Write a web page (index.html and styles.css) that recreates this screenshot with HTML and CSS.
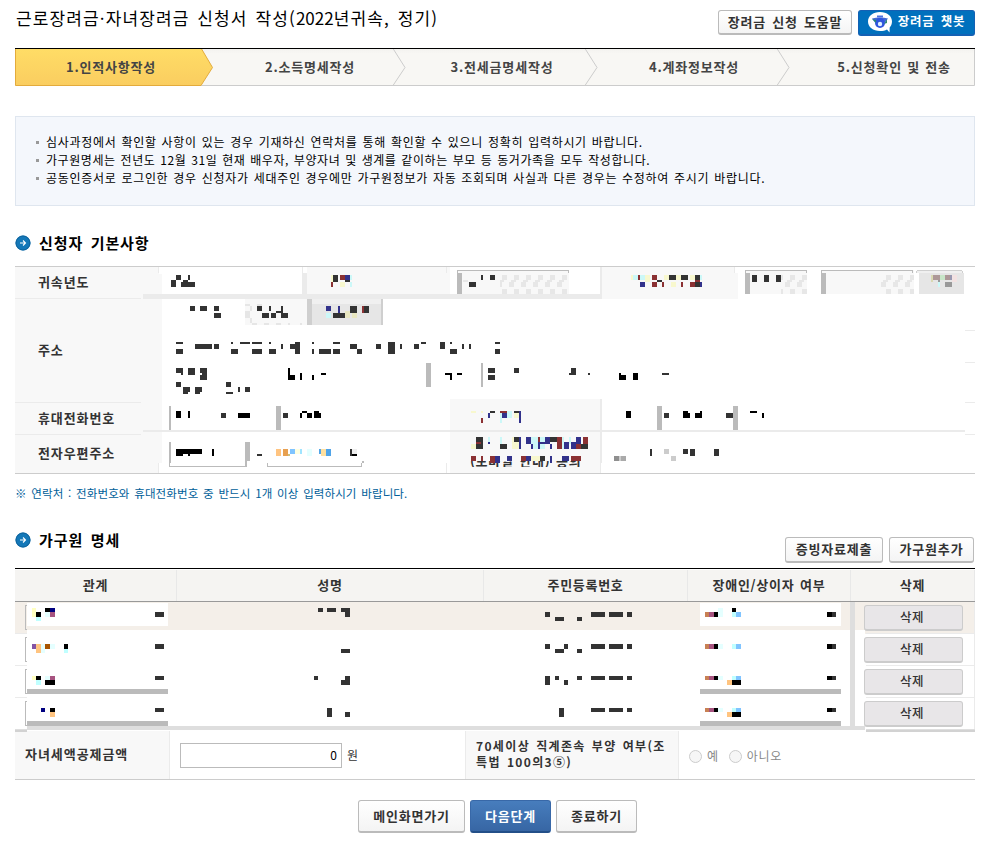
FILE: index.html
```html
<!DOCTYPE html>
<html lang="ko">
<head>
<meta charset="utf-8">
<title>근로장려금·자녀장려금 신청서 작성</title>
<link rel="stylesheet" href="styles.css">
</head>
<body>
<main class="page">
  <header class="top">
    <h1>근로장려금·자녀장려금 신청서 작성(<span class="num">2022</span>년귀속, 정기)</h1>
    <div class="top-actions">
      <button class="btn help">장려금 신청 도움말</button>
      <button class="btn chatbot">
        <svg width="25" height="21" viewBox="0 0 25 21"><path d="M12 0C5 0 0 4 0 9.500S5 19 12 19c3 0 5-.5 7-1.500l2.500 3 .2-5C23 14 24 12 24 9.500 24 4 19 0 12 0z" fill="#fff"/><path d="M4 6.500c5-1.500 11-1.500 16 0l-3 4H7z" fill="#4568d6"/><circle cx="12" cy="11" r="5" fill="#2f55dd"/><circle cx="12" cy="12" r="2.200" fill="#dff1ff"/><path d="M4 7l4 1v3zM16 12l3-5v4z" fill="#2b8a72"/><path d="M9 3.500h6v2H9z" fill="#4c70e0"/></svg>
        <span>장려금 챗봇</span>
      </button>
    </div>
  </header>

  <ol class="steps">
    <svg class="steps-bg" width="960" height="38" viewBox="15 48 960 38">
      <defs>
        <linearGradient id="gy" x1="0" y1="0" x2="0" y2="1"><stop offset="0" stop-color="#ffdd66"/><stop offset="1" stop-color="#facd60"/></linearGradient>
        <linearGradient id="gg" x1="0" y1="0" x2="0" y2="1"><stop offset="0" stop-color="#f2f1ee"/><stop offset=".15" stop-color="#f8f7f4"/><stop offset="1" stop-color="#f8f7f4"/></linearGradient>
      </defs>
      <path d="M15 48h960v38H15z" fill="url(#gg)"/>
      <path d="M200 85.500h774.500V48" fill="none" stroke="#ccc"/>
      <path d="M393 48.500l12 19-12 18M585 48.500l12 19-12 18M777 48.500l12 19-12 18" fill="none" stroke="#ccc"/>
      <path d="M15.500 48v37.500H201l11.500-18L201 48z" fill="url(#gy)" stroke="#e3ab3c"/>
      <path d="M15 48h960v1H15z" fill="#000"/>
    </svg>
    <li>1.인적사항작성</li><li>2.소득명세작성</li><li>3.전세금명세작성</li><li>4.계좌정보작성</li><li>5.신청확인 및 전송</li>
  </ol>

  <ul class="notice">
    <li>심사과정에서 확인할 사항이 있는 경우 기재하신 연락처를 통해 확인할 수 있으니 정확히 입력하시기 바랍니다.</li>
    <li class="tight">가구원명세는 전년도 12월 31일 현재 배우자, 부양자녀 및 생계를 같이하는 부모 등 동거가족을 모두 작성합니다.</li>
    <li>공동인증서로 로그인한 경우 신청자가 세대주인 경우에만 가구원정보가 자동 조회되며 사실과 다른 경우는 수정하여 주시기 바랍니다.</li>
  </ul>

  <div class="section-head basic">
    <svg class="bullet" width="16" height="16" viewBox="0 0 16 16"><circle cx="8" cy="8" r="7.500" fill="#1478b8"/><circle cx="8" cy="8" r="7" fill="none" stroke="#0f639c"/><path d="M5 8h5.500M8 5.500L10.500 8 8 10.500" fill="none" stroke="#fff" stroke-width="1.100"/></svg>
    <h2>신청자 기본사항</h2>
  </div>

  <section class="applicant">
    <div class="row r1"><div class="label">귀속년도</div></div>
    <div class="row r2"><div class="label">주소</div></div>
    <div class="row r3"><div class="label">휴대전화번호</div></div>
    <div class="row r4"><div class="label">전자우편주소</div></div>
    <svg class="mask" width="960" height="208" viewBox="15 266 960 208" shape-rendering="crispEdges">
      <defs>
        <clipPath id="tail"><path d="M465 461h125v6H465z"/></clipPath>
        <pattern id="chk" x="514" y="275" width="12" height="14" patternUnits="userSpaceOnUse"><path d="M0 0h5v5H0zM-3 5h5v2h-5zM9 5h3v2H9zM7 7h5v5H7z" fill="#e7e7e7"/></pattern>
      </defs>
      <!-- cell fills and rules -->
      <path d="M159 267h3v7h-3zM159 463h3v10h-3z" fill="#fff"/>
      <path d="M147 267h11v27h-11zM162 267h0v0h0zM307 267h143v27H307zM602 267h132v32H602zM734 273h4v26h-4zM245 299h62v26h-62zM450 399h150v74H450z" fill="#f8f8f8"/>
      <path d="M143 294h459v5H143zM302 267h1v6h-1zM302 273h5v21h-5zM158 267h1v6h-1zM446 267h1v6h-1zM600 267h2v32h-2zM734 267h1v6h-1zM158 463h1v10h-1zM446 463h1v10h-1zM600 399h2v64h-2zM600 463h1v10h-1zM143 430h822v2H143zM965 330h10v1h-10zM965 362h10v1h-10zM965 402h10v1h-10zM965 434h10v1h-10z" fill="#ebebeb"/>
      <!-- masked fields -->
      <path d="M457 270h112v24H457zM745 270h62v24h-62zM821 270h93v24h-93z" fill="#f8f8f8"/>
      <path d="M500 275h69v19h-69zM781 275h26v19h-26zM881 275h33v19h-33zM462 280h6v2h-6z" fill="url(#chk)"/>
      <path d="M457 270h112v1H457zM745 270h62v1h-62zM821 270h92v1h-92zM457 273h5v21h-5zM745 273h5v21h-5zM821 273h5v21h-5zM457 270h1v3h-1zM568 270h1v3h-1zM745 270h1v3h-1zM806 270h1v3h-1zM821 270h1v3h-1zM912 270h1v3h-1zM426 363h5v24h-5zM481 363h2v24h-2zM169 406h2v24h-2zM276 406h5v24h-5zM657 406h5v24h-5zM733 406h5v24h-5zM169 442h2v21h-2zM169 463h1v4h-1zM169 466h77v1h-77zM245 442h5v19h-5zM245 461h2v6h-2zM267 463h1v4h-1zM267 466h95v1h-95zM361 463h1v4h-1zM362 461h2v2h-2z" fill="#bbb"/>
      <path d="M245 304h5v2h-5zM250 306h2v5h-2zM245 311h5v7h-5zM250 318h2v5h-2zM252 323h5v2h-5zM264 323h5v2h-5zM276 323h5v2h-5zM288 323h2v2h-2zM300 323h2v2h-2zM257 304h5v2h-5zM312 304h69v21h-69zM919 273h45v21h-45z" fill="#e6e6e6"/>
      <path d="M312 299h69v5h-69zM917 271h45v2h-45z" fill="#f0f0f0"/>
      <path d="M307 299h5v26h-5zM381 299h2v26h-2zM917 270h45v1h-45zM916 271h1v2h-1zM962 271h1v2h-1z" fill="#cfcfcf"/>
      <text class="tail" x="470" y="466" clip-path="url(#tail)">(모바일 안내) 동의</text>
      <!-- light tints -->
      <path d="M331 275h2v7h-2zM340 282h5v5h-5zM631 275h2v5h-2zM645 275h5v7h-5zM664 275h5v5h-5zM676 275h5v5h-5zM690 275h5v5h-5zM671 282h5v5h-5zM471 411h5v2h-5zM481 411h2v2h-2zM514 413h5v5h-5zM471 444h5v5h-5zM512 437h7v12h-7zM531 456h9v5h-9z" fill="#f8f8ce"/>
      <path d="M345 311h5v7h-5zM352 313h5v5h-5z" fill="#e8e6c0"/>
      <path d="M350 275h2v5h-2zM350 282h2v5h-2zM633 275h5v5h-5zM640 275h5v5h-5zM700 275h2v5h-2zM326 313h5v5h-5zM500 413h2v10h-2zM507 411h5v7h-5zM488 437h2v5h-2zM500 437h2v7h-2zM531 437h14v12h-14zM562 437h2v12h-2zM569 437h2v7h-2zM938 282h2v5h-2z" fill="#ccf8f8"/>
      <!-- dark pixels -->
      <path d="M333 275h5v7h-5zM345 280h5v2h-5zM657 280h5v2h-5zM669 275h7v5h-7zM681 275h7v5h-7zM695 275h5v5h-5zM695 282h5v5h-5zM481 275h2v5h-2zM490 275h5v5h-5zM469 282h7v5h-7zM752 275h5v7h-5zM764 275h5v7h-5zM776 275h5v7h-5zM171 280h5v7h-5zM176 275h5v5h-5zM181 282h14v5h-14zM188 275h2v5h-2zM183 280h5v2h-5zM190 306h5v5h-5zM200 306h7v5h-7zM214 306h5v5h-5zM214 313h7v5h-7zM257 306h5v5h-5zM269 306h2v5h-2zM281 306h2v7h-2zM276 311h7v2h-7zM262 313h7v5h-7zM271 313h5v5h-5zM281 313h7v5h-7zM333 313h12v5h-12zM350 306h7v7h-7zM364 306h5v7h-5z" fill="#333"/>
      <path d="M176 342h7v2h-7zM176 349h7v5h-7zM195 344h17v5h-17zM214 344h5v5h-5zM231 342h2v2h-2zM231 349h7v5h-7zM240 342h10v2h-10zM252 342h10v2h-10zM252 349h10v5h-10zM269 342h2v2h-2zM269 349h7v5h-7zM281 344h2v5h-2zM290 344h10v5h-10zM295 342h5v12h-5zM312 342h2v2h-2zM312 349h2v5h-2zM319 349h12v5h-12zM333 342h7v2h-7zM333 349h7v5h-7zM350 344h7v5h-7zM357 349h5v5h-5zM376 344h5v5h-5zM388 342h7v12h-7zM400 344h2v5h-2zM414 344h5v5h-5zM421 342h5v2h-5zM440 342h5v7h-5zM450 342h2v2h-2zM450 349h7v5h-7zM462 344h2v5h-2zM469 344h2v5h-2zM495 342h5v2h-5zM495 349h5v5h-5z" fill="#333"/>
      <path d="M176 368h7v5h-7zM181 373h2v2h-2zM188 368h7v7h-7zM200 368h7v5h-7zM202 373h5v2h-5zM200 375h7v5h-7zM176 382h5v5h-5zM183 387h7v5h-7zM183 392h5v2h-5zM195 387h7v5h-7zM195 392h5v2h-5zM226 382h5v5h-5zM226 392h7v2h-7zM238 387h2v5h-2zM245 387h5v5h-5zM488 368h7v5h-7zM488 375h7v5h-7zM514 368h5v5h-5zM571 368h5v7h-5zM569 373h7v2h-7zM588 373h2v2h-2zM662 373h7v2h-7z" fill="#333"/>
      <path d="M221 413h5v5h-5zM283 413h5v5h-5zM490 411h5v2h-5zM514 411h5v2h-5zM664 413h5v5h-5zM726 413h7v5h-7zM257 454h5v2h-5zM350 449h2v7h-2zM476 437h7v12h-7zM500 444h7v5h-7zM514 437h5v5h-5zM550 437h7v5h-7zM581 444h7v5h-7zM540 456h5v5h-5zM650 449h2v7h-2zM683 449h5v5h-5zM690 449h5v7h-5zM714 449h5v7h-5z" fill="#333"/>
      <path d="M288 368h2v12h-2zM288 375h7v5h-7zM300 373h2v7h-2zM312 375h2v5h-2zM321 373h5v2h-5zM445 373h7v2h-7zM450 375h2v5h-2zM457 373h5v2h-5zM619 373h2v2h-2zM619 375h7v5h-7zM633 373h5v7h-5zM176 411h5v7h-5zM188 411h2v7h-2zM238 413h12v5h-12zM300 413h2v5h-2zM302 411h5v2h-5zM307 413h5v5h-5zM314 411h5v2h-5zM314 413h7v5h-7zM626 411h5v7h-5zM683 411h5v7h-5zM688 413h2v5h-2zM695 413h7v5h-7zM700 411h2v2h-2zM750 411h7v2h-7zM762 413h2v5h-2zM176 449h26v5h-26zM176 454h7v2h-7zM188 454h2v2h-2zM212 449h2v7h-2zM352 454h5v2h-5z" fill="#000"/>
      <path d="M340 275h5v5h-5zM331 282h2v5h-2zM638 275h2v5h-2zM652 275h5v5h-5zM652 282h5v5h-5zM662 282h2v5h-2zM681 282h2v5h-2zM690 282h5v5h-5zM695 280h5v2h-5zM362 306h2v7h-2zM481 418h2v5h-2zM500 411h7v2h-7zM476 442h5v2h-5zM538 437h2v5h-2zM557 437h5v12h-5zM576 444h5v5h-5zM583 437h5v7h-5zM471 456h5v5h-5zM481 456h2v5h-2zM490 456h5v7h-5zM521 456h5v5h-5zM571 456h10v5h-10z" fill="#8b3133"/>
      <path d="M345 275h5v5h-5zM640 282h5v5h-5zM700 282h2v5h-2zM326 306h5v5h-5zM338 306h2v7h-2zM488 413h2v5h-2zM502 413h5v5h-5zM519 411h2v12h-2zM488 442h2v2h-2zM519 437h2v12h-2zM526 437h5v7h-5zM531 444h2v5h-2zM538 442h12v2h-12zM545 437h5v7h-5zM538 444h2v5h-2zM550 444h2v5h-2zM564 442h5v7h-5zM571 442h5v7h-5zM576 437h5v7h-5zM495 456h5v7h-5zM507 456h5v5h-5zM526 456h5v5h-5zM550 456h2v7h-2zM562 456h7v5h-7z" fill="#32328b"/>
      <path d="M933 275h7v5h-7zM945 275h5v5h-5z" fill="#ad9898"/><path d="M938 280h2v2h-2zM945 282h7v5h-7z" fill="#999"/><path d="M931 275h2v7h-2z" fill="#d9d9b2"/><path d="M940 275h5v5h-5z" fill="#c8e6c8"/><path d="M950 275h2v5h-2z" fill="#9898b0"/><path d="M952 275h5v7h-5z" fill="#f2e2e2"/>
      <path d="M276 449h5v7h-5z" fill="#ffc480"/><path d="M283 449h5v7h-5z" fill="#e8a050"/><path d="M288 454h2v2h-2z" fill="#ccc080"/><path d="M290 449h5v5h-5z" fill="#80c4ff"/><path d="M295 449h5v5h-5z" fill="#ffffe0"/><path d="M300 449h2v5h-2z" fill="#a0e4ff"/><path d="M307 449h5v7h-5z" fill="#e5ffff"/><path d="M319 449h2v5h-2zM326 449h5v7h-5z" fill="#50a4e8"/><path d="M321 449h5v7h-5z" fill="#ffe0a0"/><path d="M352 449h5v5h-5z" fill="#eee"/>
      <path d="M614 456h5v5h-5z" fill="#8f8f8f"/><path d="M621 456h5v5h-5z" fill="#aaa"/><path d="M619 456h2v5h-2zM664 449h5v5h-5zM671 456h5v5h-5z" fill="#ccc"/>
    </svg>
  </section>
  <p class="caution">※ 연락처 : 전화번호와 휴대전화번호 중 반드시 1개 이상 입력하시기 바랍니다.</p>

  <div class="section-head family">
    <svg class="bullet" width="16" height="16" viewBox="0 0 16 16"><circle cx="8" cy="8" r="7.500" fill="#1478b8"/><circle cx="8" cy="8" r="7" fill="none" stroke="#0f639c"/><path d="M5 8h5.500M8 5.500L10.500 8 8 10.500" fill="none" stroke="#fff" stroke-width="1.100"/></svg>
    <h2>가구원 명세</h2>
    <div class="family-actions"><button class="btn proof">증빙자료제출</button><button class="btn add">가구원추가</button></div>
  </div>

  <section class="members">
    <div class="mhead"><div>관계</div><div>성명</div><div>주민등록번호</div><div>장애인/상이자 여부</div><div>삭제</div></div>
    <div class="mrow first"><button class="del">삭제</button></div>
    <div class="mrow"><button class="del">삭제</button></div>
    <div class="mrow"><button class="del">삭제</button></div>
    <div class="mrow"><button class="del">삭제</button></div>
    <svg class="mask" width="960" height="164" viewBox="15 568 960 164" shape-rendering="crispEdges">
      <path d="M27 603h141v23H27zM700 603h141v23H700zM27 630h838v4H27z" fill="#fff"/>
      <path d="M15 633h12v1H15zM15 665h12v1H15zM15 697h12v1H15zM866 633h109v1H866zM866 665h109v1H866zM866 697h109v1H866zM974 602h1v127h-1z" fill="#ebebeb"/>
      <path d="M25 605h2v1h-1v23h1v1h-2zM25 637h2v1h-1v23h1v1h-2zM25 669h2v1h-1v23h1v1h-2zM25 701h2v1h-1v23h1v1h-2zM27 689h141v5H27zM27 721h141v5H27zM700 689h141v5H700zM700 721h141v5H700z" fill="#bbb"/>
      <path d="M850 602h5v124h-5zM27 726h838v4H27zM15 729h12v1H15zM866 729h109v1H866z" fill="#dedede"/>
      <path d="M15 730h12v2H15zM866 730h109v2H866z" fill="#d2d2d2"/>
      <path d="M155 612h9v5h-9zM318 608h5v4h-5zM327 608h9v4h-9zM341 608h9v4h-9zM345 612h5v5h-5zM545 612h5v5h-5zM555 617h9v4h-9zM577 617h5v4h-5zM591 612h14v5h-14zM609 612h14v5h-14zM627 612h5v5h-5zM832 612h4v5h-4zM155 644h9v5h-9zM341 649h9v4h-9zM545 644h5v5h-5zM564 644h4v5h-4zM555 649h9v4h-9zM577 649h5v4h-5zM591 644h14v5h-14zM609 644h14v5h-14zM627 644h5v5h-5zM832 644h4v5h-4z" fill="#333"/>
      <path d="M155 676h9v4h-9zM314 676h4v4h-4zM345 676h5v4h-5zM341 680h9v5h-9zM545 676h5v9h-5zM555 676h4v4h-4zM564 680h4v5h-4zM577 676h5v4h-5zM591 676h14v4h-14zM609 676h14v4h-14zM627 676h5v4h-5zM832 676h4v4h-4zM155 708h9v4h-9zM327 708h5v9h-5zM345 712h5v5h-5zM559 708h5v9h-5zM591 708h14v4h-14zM609 708h14v4h-14zM627 708h5v4h-5zM832 708h4v4h-4z" fill="#333"/>
      <path d="M36 612h5v5h-5zM45 608h5v4h-5zM64 644h4v5h-4zM36 676h5v4h-5zM45 680h10v5H45zM50 708h5v4h-5zM714 612h4v5h-4zM732 608h4v4h-4zM827 612h5v5h-5zM714 644h4v5h-4zM827 644h5v5h-5zM714 676h4v4h-4zM827 676h5v4h-5zM732 680h9v5h-9zM714 708h4v4h-4zM827 708h5v4h-5zM732 712h9v5h-9z" fill="#000"/>
      <path d="M32 608h4v9h-4zM32 676h4v4h-4z" fill="#ffffc0"/>
      <path d="M36 617h5v4h-5zM64 649h4v4h-4zM36 680h5v5h-5zM732 612h4v5h-4zM732 644h4v5h-4zM732 676h4v4h-4zM732 708h4v4h-4z" fill="#c0ffff"/>
      <path d="M45 612h5v5h-5zM41 644h4v9h-4zM50 644h5v5h-5zM45 676h5v4h-5zM718 608h5v9h-5zM718 644h5v5h-5zM718 676h5v4h-5zM718 708h5v4h-5z" fill="#e5ffff"/>
      <path d="M50 608h5v4h-5zM41 708h4v4h-4z" fill="#000080"/>
      <path d="M50 612h5v5h-5zM50 676h5v4h-5zM709 612h5v5h-5zM709 644h5v5h-5zM709 676h5v4h-5zM709 708h5v4h-5z" fill="#a75480"/>
      <path d="M705 612h4v5h-4zM705 644h4v5h-4zM705 676h4v4h-4zM705 708h4v4h-4z" fill="#c88054"/>
      <path d="M736 612h5v5h-5zM736 644h5v5h-5zM736 676h5v4h-5zM736 708h5v4h-5z" fill="#80c4ff"/>
      <path d="M36 644h5v9h-5zM50 712h5v5h-5zM727 680h5v5h-5zM727 712h5v5h-5z" fill="#ffc480"/>
      <path d="M32 644h4v5h-4z" fill="#8454a4"/><path d="M45 644h5v5h-5z" fill="#a85400"/>
    </svg>
  </section>

  <section class="extra">
    <div class="xlabel">자녀세액공제금액</div>
    <div class="xvalue"><input class="amount" type="text" value="0"><span>원</span></div>
    <div class="xlabel two">70세이상 직계존속 부양 여부(조<br>특법 100의3⑤)</div>
    <div class="xvalue radios"><i class="radio"></i><span>예</span><i class="radio"></i><span>아니오</span></div>
  </section>

  <footer class="bottom">
    <button class="btn main">메인화면가기</button><button class="btn next">다음단계</button><button class="btn quit">종료하기</button>
  </footer>
</main>
</body>
</html>
```
FILE: styles.css
```css
* { box-sizing: border-box; }
body {
  margin: 0;
  background: #fff;
  color: #000;
  font: 12px/18px "Noto Sans CJK KR", sans-serif;
  letter-spacing: .7px;
  word-spacing: 1.4px;
}
h1, h2, p, ul, ol { margin: 0; padding: 0; list-style: none; }
svg { display: block; }
.page { width: 960px; margin-left: 15px; height: 844px; overflow: hidden; }

.top { display: flex; justify-content: space-between; height: 48px; }
h1 { font-size: 17px; line-height: 24px; font-weight: 400; letter-spacing: 1.12px; word-spacing: 2px; padding: 6px 0 0 1px; white-space: nowrap; }
h1 .num { letter-spacing: 0; }
.top-actions { display: flex; gap: 6px; padding-top: 10px; }

.btn {
  font: 700 13px/1 "Noto Sans CJK KR", sans-serif;
  letter-spacing: .8px;
  word-spacing: 1.7px;
  color: #333;
  padding: 0 0 2px;
  border: 1px solid #bbb;
  border-bottom-width: 2px;
  border-radius: 3px;
  background: linear-gradient(#fff, #f4f4f4);
  white-space: nowrap;
  display: flex;
  align-items: center;
  justify-content: center;
}
.help { width: 134px; height: 25px; }
.chatbot { width: 117px; height: 26px; gap: 5px; font-size: 12.5px; color: #fff; background: #0070bd; border-color: #1461b4; }
.chatbot svg { margin-top: 2px; }

.steps { position: relative; display: grid; grid-template-columns: repeat(5, 192px); height: 38px; }
.steps-bg { position: absolute; left: 0; top: 0; }
.steps li { position: relative; text-align: center; font-weight: 700; font-size: 13px; line-height: 38px; letter-spacing: .8px; color: #444; padding-left: 14px; }
.steps li:nth-of-type(1) { padding-left: 0; }
.steps li:nth-of-type(5) { padding-left: 30px; word-spacing: .8px; }

.notice { margin-top: 30px; height: 90px; border: 1px solid #dfe6ef; background: #f4f7fc; padding: 16px 0 0 20px; }
.notice li { display: flex; align-items: center; gap: 7px; white-space: nowrap; height: 18px; word-spacing: .9px; }
.notice li.tight { letter-spacing: .58px; word-spacing: .9px; }
.notice li::before { content: ""; width: 3px; height: 3px; background: #999; }

.section-head { display: flex; align-items: center; gap: 8px; }
h2 { font-size: 15px; font-weight: 700; line-height: 20px; letter-spacing: .9px; word-spacing: 2.5px; }
.basic { margin-top: 27px; height: 20px; }

.applicant { position: relative; height: 208px; margin-top: 13px; border-top: 1px solid #ccc; border-bottom: 1px solid #ccc; }
.mask { position: absolute; left: 0; top: 0; }
.applicant .mask { top: -1px; }
.tail { font-weight: 700; font-size: 13px; fill: #333; }
.row { display: flex; }
.r1 { height: 32px; }
.r2 { height: 104px; }
.r3 { height: 32px; }
.r4 { height: 38px; }
.label { width: 147px; padding: 0 0 2px 23px; display: flex; align-items: center; font-weight: 700; font-size: 13px; letter-spacing: .9px; color: #333; background: #f8f8f8 linear-gradient(#ebebeb, #ebebeb) 0 100% / 126px 1px no-repeat; }
.r4 .label { background-image: none; }

.caution { margin-top: 10px; font-size: 11.5px; line-height: 18px; color: #005e99; white-space: nowrap; letter-spacing: .1px; }
.family { margin-top: 26px; height: 40px; align-items: flex-start; }
.family .bullet { margin-top: 4px; }
.family h2 { margin-top: 2px; flex: 1; }
.family-actions { display: flex; gap: 6px; margin: 9px 1px 0 0; }
.proof { width: 98px; height: 26px; }
.add { width: 85px; height: 26px; }

.members { position: relative; height: 163px; border-top: 1px solid #000; }
.members .mask { top: -1px; pointer-events: none; }
.mhead { display: grid; grid-template-columns: 162px 307px 204px 163px 124px; height: 33px; padding-top: 1px; border-bottom: 1px solid #999; }
.mhead div { background: #f5f4f2; border-right: 1px solid #e8e8e8; text-align: center; font-weight: 700; font-size: 13px; line-height: 29px; color: #333; }
.mrow { height: 32px; display: flex; justify-content: flex-end; padding: 3px 12px 0 0; }
.first { background: #f4efe9; }
.del { width: 99px; height: 26px; padding: 0 3px 0 0; border: 1px solid #ccc; border-bottom-width: 2px; border-radius: 3px; background: #e8e6e8; font: 500 12.5px/1 "Noto Sans CJK KR", sans-serif; letter-spacing: .4px; color: #333; }

.extra { display: grid; grid-template-columns: 155px 295px 214px 296px; height: 49px; border-bottom: 1px solid #ccc; }
.xlabel { background: #f8f8f8; border-right: 1px solid #ebebeb; display: flex; align-items: center; padding: 0 0 2px 10px; font-weight: 700; font-size: 13px; letter-spacing: .95px; line-height: 16px; color: #333; }
.xlabel.two { border-left: 1px solid #ebebeb; display: block; padding-top: 7px; white-space: nowrap; font-size: 12px; letter-spacing: 1.35px; }
.xvalue { display: flex; align-items: center; padding-left: 10px; gap: 5px; color: #333; }
.amount { width: 162px; height: 25px; border: 1px solid #bbb; padding: 0 4px 2px; text-align: right; font: 12px "Noto Sans CJK KR", sans-serif; }
.radios { gap: 5px; color: #888; padding-top: 2px; }
.radio { width: 13px; height: 13px; border: 1px solid #ccc; border-radius: 50%; background: #f6f6f6; }
.radios span + .radio { margin-left: 5px; }

.bottom { display: flex; justify-content: center; gap: 5px; margin-top: 20px; padding-left: 5px; }
.bottom .btn { height: 33px; width: 81px; }
.bottom .main { width: 107px; }
.bottom .next { background: linear-gradient(#477dbd, #3766a4); color: #fff; border-color: #3868a8 #3868a8 #234f88; }
```
